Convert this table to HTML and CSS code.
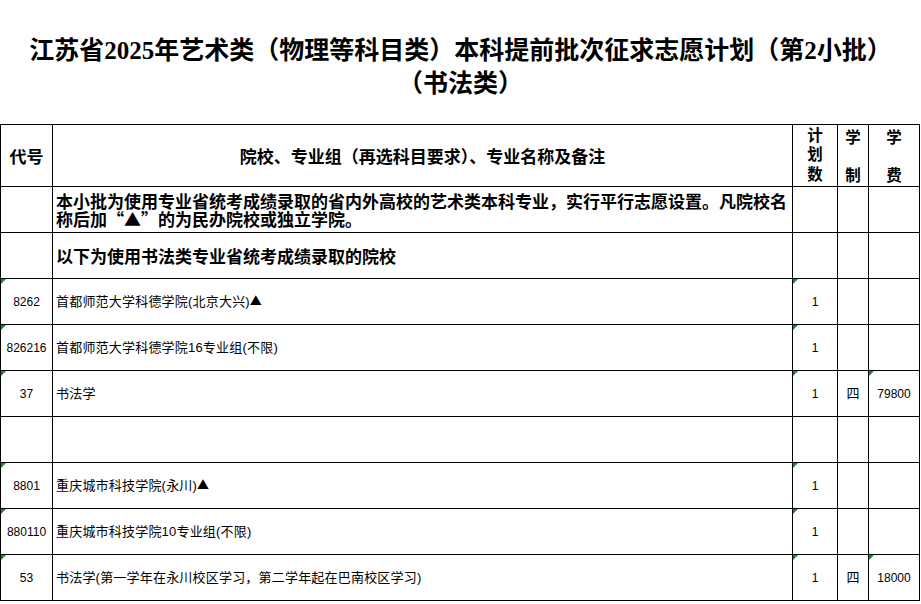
FILE: index.html
```html
<!DOCTYPE html>
<html lang="zh-CN">
<head>
<meta charset="utf-8">
<title>征求志愿计划</title>
<link rel="stylesheet" href="styles.css">
</head>
<body>
<div class="page">
  <h1 class="title">
    <span class="line">江苏省<span class="num">2025</span>年艺术类（物理等科目类）本科提前批次征求志愿计划（第<span class="num">2</span>小批）</span>
    <span class="line">（书法类）</span>
  </h1>
  <table class="plan">
    <colgroup>
      <col class="c-code">
      <col class="c-name">
      <col class="c-count">
      <col class="c-year">
      <col class="c-fee">
    </colgroup>
    <thead>
      <tr class="head">
        <th>代号</th>
        <th>院校、专业组（再选科目要求）、专业名称及备注</th>
        <th><div class="vstack"><span class="vtext">计划数</span></div></th>
        <th><div class="vstack spread"><span>学</span><span>制</span></div></th>
        <th><div class="vstack spread"><span>学</span><span>费</span></div></th>
      </tr>
    </thead>
    <tbody>
      <tr class="note">
        <td></td>
        <td class="left bold">本小批为使用专业省统考成绩录取的省内外高校的艺术类本科专业，实行平行志愿设置。凡院校名称后加“▲”的为民办院校或独立学院。</td>
        <td></td><td></td><td></td>
      </tr>
      <tr class="note">
        <td></td>
        <td class="left bold">以下为使用书法类专业省统考成绩录取的院校</td>
        <td></td><td></td><td></td>
      </tr>
      <tr>
        <td class="mark">8262</td>
        <td class="left">首都师范大学科德学院(北京大兴)<span class="tri">▲</span></td>
        <td class="mark">1</td><td class="cjk"></td><td></td>
      </tr>
      <tr>
        <td class="mark">826216</td>
        <td class="left">首都师范大学科德学院16专业组(不限)</td>
        <td class="mark">1</td><td class="cjk"></td><td></td>
      </tr>
      <tr>
        <td class="mark">37</td>
        <td class="left">书法学</td>
        <td class="mark">1</td><td class="cjk">四</td><td class="mark">79800</td>
      </tr>
      <tr>
        <td></td><td></td><td></td><td></td><td></td>
      </tr>
      <tr>
        <td class="mark">8801</td>
        <td class="left">重庆城市科技学院(永川)<span class="tri">▲</span></td>
        <td class="mark">1</td><td class="cjk"></td><td></td>
      </tr>
      <tr>
        <td class="mark">880110</td>
        <td class="left">重庆城市科技学院10专业组(不限)</td>
        <td class="mark">1</td><td class="cjk"></td><td></td>
      </tr>
      <tr>
        <td class="mark">53</td>
        <td class="left">书法学(第一学年在永川校区学习，第二学年起在巴南校区学习)</td>
        <td class="mark">1</td><td class="cjk">四</td><td class="mark">18000</td>
      </tr>
    </tbody>
  </table>
</div>
</body>
</html>
```

FILE: styles.css
```css
html, body {
  margin: 0;
  padding: 0;
  background: #ffffff;
}

body {
  overflow: hidden;
  font-family: "Liberation Sans", "Noto Sans CJK SC", sans-serif;
  color: #000000;
}

.page {
  width: 921px;
  padding-top: 32px;
}

.title {
  margin: 0 0 26px 0;
  padding: 0;
  font-family: "Noto Sans CJK SC", sans-serif;
  font-weight: 700;
  font-size: 25px;
  line-height: 33px;
  text-align: center;
}

.title .line {
  display: block;
  height: 33px;
  overflow: visible;
  white-space: nowrap;
}

.title .num {
  font-family: "Liberation Serif", serif;
  font-weight: 700;
  line-height: 1;
}

.plan {
  border-collapse: collapse;
  table-layout: fixed;
  width: 919px;
}

.c-code { width: 52px; }
.c-name { width: 740px; }
.c-count { width: 45px; }
.c-year { width: 31px; }
.c-fee { width: 51px; }

.plan th,
.plan td {
  border: 1px solid #000000;
  padding: 0;
  text-align: center;
  vertical-align: middle;
  position: relative;
}

.plan th {
  height: 61px;
  font-family: "Noto Sans CJK SC", sans-serif;
  font-weight: 700;
  font-size: 17px;
  line-height: 19px;
}

.plan td {
  height: 45px;
  font-size: 12px;
  line-height: 16px;
  white-space: nowrap;
}

.plan td.cjk {
  font-size: 13px;
}

.plan td.left {
  text-align: left;
  padding-left: 3px;
  font-size: 13px;
  letter-spacing: 0.2px;
}

.tri {
  font-family: "Noto Sans CJK SC", sans-serif;
  font-size: 12px;
}

.plan td.bold {
  font-family: "Noto Sans CJK SC", sans-serif;
  font-weight: 700;
  font-size: 17px;
  line-height: 18px;
  letter-spacing: 0;
  white-space: normal;
  padding-right: 4px;
}

.vstack {
  display: flex;
  flex-direction: column;
  align-items: center;
  height: 58px;
  justify-content: flex-start;
}

.vstack span {
  display: block;
  font-size: 15.5px;
  line-height: 19.5px;
  height: 19.5px;
}

.vstack span.vtext {
  writing-mode: vertical-rl;
  text-orientation: upright;
  white-space: nowrap;
  letter-spacing: 4px;
  height: 60px;
  line-height: 20px;
  width: 20px;
  flex-shrink: 0;
}

.vstack.spread {
  justify-content: space-between;
}

.mark::before {
  content: "";
  position: absolute;
  left: 0;
  top: 0;
  width: 0;
  height: 0;
  border-top: 5px solid #1f8a1f;
  border-right: 5px solid transparent;
}
```
